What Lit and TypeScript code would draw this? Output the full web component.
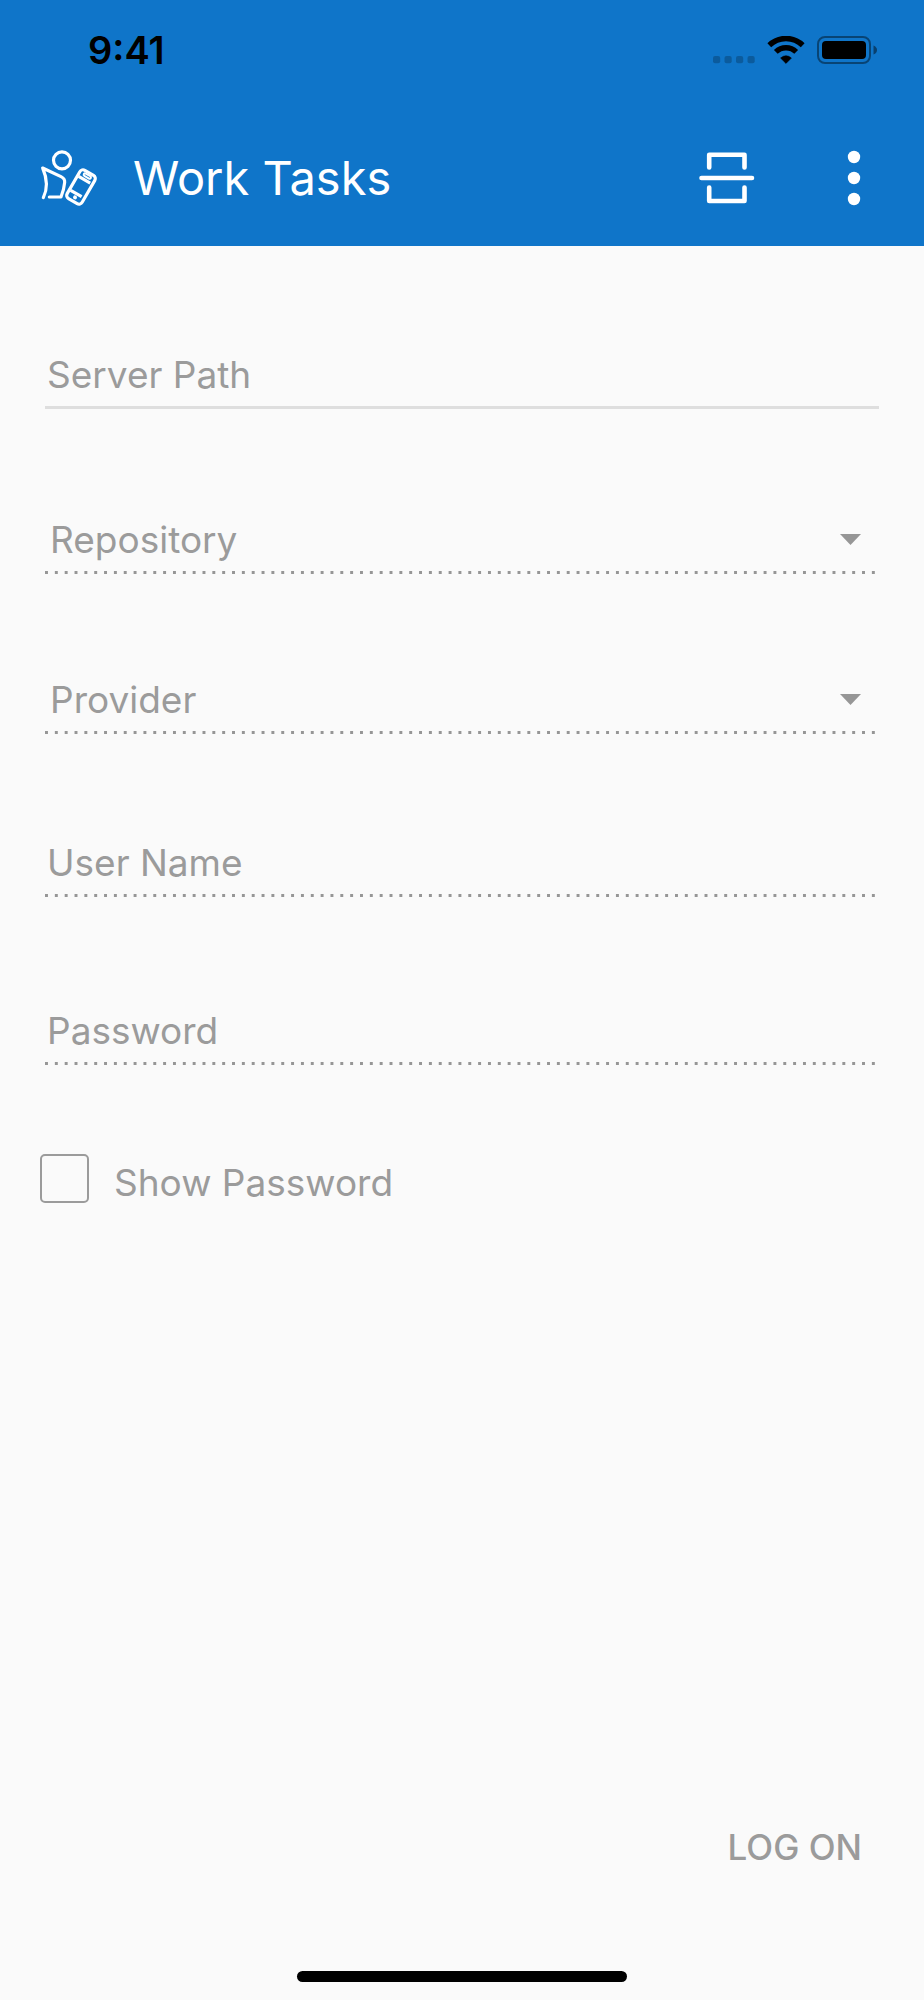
import { LitElement, html, css, svg } from "lit";
import { customElement, property, state } from "lit/decorators.js";

@customElement("status-bar")
class StatusBar extends LitElement {
  static styles = css`
    :host {
      display: flex;
      align-items: center;
      justify-content: space-between;
      height: 96px;
      padding: 2px 47px 0 88px;
      color: #000;
    }
    .time {
      font-size: 38px;
      line-height: 44px;
      font-weight: 600;
    }
    .indicators {
      display: flex;
      align-items: center;
      gap: 12px;
    }
    svg {
      display: block;
    }
  `;

  render() {
    return html`
      <span class="time">9:41</span>
      <div class="indicators">
        <svg width="42" height="28" viewBox="0 0 42 28" fill="#000" fill-opacity="0.22" aria-hidden="true">
          ${[0, 11.5, 23, 34.5].map((x) => svg`<rect x=${x} y="20" width="7.2" height="7.2" rx="2" />`)}
        </svg>
        <svg width="38" height="28" viewBox="0 0 38 28" role="img" aria-label="Wi-Fi">
          <g fill="none" stroke="#000" stroke-width="5.4">
            <path d="M2.3 9.2A24 24 0 0 1 35.7 9.2" />
            <path d="M8.8 15.9A14.6 14.6 0 0 1 29.2 15.9" />
          </g>
          <path d="M19 27.4 13.6 22Q19 17.6 24.4 22Z" stroke="#000" stroke-width="0.6" stroke-linejoin="round" />
        </svg>
        <svg width="60" height="28" viewBox="0 0 60 28" role="img" aria-label="Battery full">
          <rect x="1" y="1" width="52" height="26" rx="7" fill="none" stroke="#000" stroke-opacity="0.42" stroke-width="2" />
          <rect x="5" y="5" width="44" height="18" rx="4" />
          <path d="M56.5 9.5Q60 11 60 14T56.5 18.5Z" fill-opacity="0.45" />
        </svg>
      </div>
    `;
  }
}

@customElement("app-bar")
class AppBar extends LitElement {
  @property() heading = "";

  static styles = css`
    :host {
      display: flex;
      align-items: center;
      height: 136px;
      padding: 12px 46px 0 40px;
      color: #fff;
    }
    .logo {
      flex: none;
      margin-right: 35px;
    }
    svg {
      display: block;
    }
    h1 {
      flex: 1;
      margin: 0;
      font-size: 47px;
      line-height: 60px;
      font-weight: 400;
    }
    .actions {
      display: flex;
      gap: 75px;
    }
    button {
      padding: 0;
      border: 0;
      background: none;
      color: inherit;
      cursor: pointer;
    }
  `;

  render() {
    return html`
      <svg class="logo" width="58" height="58" viewBox="120 445 174 174" fill="none" stroke="currentColor"
        stroke-width="9.5" stroke-linecap="round" stroke-linejoin="round" aria-hidden="true">
        <circle cx="186" cy="479" r="25.5" />
        <path d="M130 591C144 562 141 532 128 502L183 528Q195 534 194 545Q192 567 183 589H148" />
        <g transform="translate(243 559) rotate(30)">
          <rect x="-26" y="-49" width="52" height="98" rx="11" />
          <path d="M-22-24H18M-22 24H16" stroke-linecap="butt" />
          <rect x="-12" y="-42" width="24" height="8" rx="4" stroke-width="6" />
          <circle cx="0" cy="36" r="6" fill="currentColor" stroke="none" />
        </g>
      </svg>
      <h1>${this.heading}</h1>
      <div class="actions">
        <button type="button" aria-label="Scan code">
          <svg width="56" height="56" viewBox="0 0 56 56" fill="none" stroke="currentColor" stroke-width="4.6"
            stroke-linecap="round" stroke-linejoin="round">
            <path d="M10.2 17.5V4.8H45.5V17.5M10.2 37.5V51H45.5V37.5M2.5 28H53" />
          </svg>
        </button>
        <button type="button" aria-label="More options">
          <svg width="48" height="56" viewBox="0 0 48 56" fill="currentColor">
            ${[7, 28, 49].map((y) => svg`<circle cx="24" cy=${y} r="6.2" />`)}
          </svg>
        </button>
      </div>
    `;
  }
}

@customElement("log-on-form")
class LogOnForm extends LitElement {
  @state() private showPassword = false;

  static styles = css`
    :host {
      flex: 1;
      display: flex;
    }
    form {
      flex: 1;
      display: flex;
      flex-direction: column;
      padding: 44px 45px 0;
      color: #9b9b9b;
    }
    .field {
      display: grid;
      align-items: center;
      height: 72px;
      box-sizing: border-box;
      padding: 6px 0 3px;
      background-repeat: repeat-x;
      background-position: left bottom;
      background-image: linear-gradient(90deg, #969696 3px, transparent 3px);
      background-size: calc((100% + 3px) / 85) 3px;
    }
    .text {
      margin: 47px 0 49px;
    }
    .choice {
      margin: 44px 0;
    }
    .enabled {
      background-image: linear-gradient(#dedede, #dedede);
      background-size: 100% 3px;
    }
    input,
    select,
    button {
      font: inherit;
      color: inherit;
      background: none;
      border: 0;
      border-radius: 0;
      outline: 0;
      margin: 0;
      opacity: 1;
    }
    .control {
      grid-area: 1 / 1;
      width: 100%;
      height: 60px;
      box-sizing: border-box;
      padding: 0 0 0 2px;
      font-size: 37px;
      line-height: 48px;
    }
    select.control {
      appearance: none;
      padding-left: 5px;
    }
    .control::placeholder {
      color: inherit;
      opacity: 1;
    }
    .arrow {
      grid-area: 1 / 1;
      justify-self: end;
      margin-right: 18px;
      pointer-events: none;
    }
    .toggle {
      display: flex;
      align-items: center;
      align-self: flex-start;
      gap: 25px;
      margin: 40px 0 0 -5px;
      font-size: 37px;
      line-height: 56px;
    }
    .toggle input {
      appearance: none;
      width: 49px;
      height: 49px;
      margin-bottom: 8px;
      border: 2px solid #9b9b9b;
      border-radius: 5px;
    }
    .toggle input:checked {
      background: #9b9b9b;
      box-shadow: inset 0 0 0 8px #fafafa;
    }
    .actions {
      display: flex;
      justify-content: flex-end;
      margin-top: auto;
      padding-bottom: 92px;
    }
    .submit {
      padding: 12px 17px;
      font-size: 35px;
      line-height: 40px;
      font-weight: 500;
    }
  `;

  private choice(label: string) {
    return html`
      <div class="field choice">
        <select class="control" aria-label=${label} disabled>
          <option>${label}</option>
        </select>
        <svg class="arrow" width="21" height="11" viewBox="0 0 21 11" fill="#969696" aria-hidden="true">
          <path d="M0 0H21L10.5 11Z" />
        </svg>
      </div>
    `;
  }

  render() {
    return html`
      <form @submit=${(e: Event) => e.preventDefault()}>
        <div class="field text enabled">
          <input class="control" type="text" placeholder="Server Path" aria-label="Server Path" />
        </div>
        ${this.choice("Repository")} ${this.choice("Provider")}
        <div class="field text">
          <input class="control" type="text" placeholder="User Name" aria-label="User Name" disabled />
        </div>
        <div class="field text">
          <input class="control" type=${this.showPassword ? "text" : "password"} placeholder="Password"
            aria-label="Password" disabled />
        </div>
        <label class="toggle">
          <input type="checkbox" .checked=${this.showPassword}
            @change=${(e: Event) => (this.showPassword = (e.target as HTMLInputElement).checked)} />
          <span>Show Password</span>
        </label>
        <div class="actions">
          <button class="submit" type="submit" disabled>LOG ON</button>
        </div>
      </form>
    `;
  }
}

@customElement("app-root")
class AppRoot extends LitElement {
  static styles = css`
    :host {
      display: flex;
      flex-direction: column;
      min-height: 100vh;
      background: #fafafa;
      font-family: Inter, "Liberation Sans", sans-serif;
    }
    header {
      background: #0f75c9;
    }
    .home {
      align-self: center;
      width: 330px;
      max-width: 60%;
      height: 11px;
      margin-bottom: 18px;
      border-radius: 6px;
      background: #000;
    }
  `;

  render() {
    return html`
      <header>
        <status-bar></status-bar>
        <app-bar heading="Work Tasks"></app-bar>
      </header>
      <log-on-form></log-on-form>
      <div class="home"></div>
    `;
  }
}
